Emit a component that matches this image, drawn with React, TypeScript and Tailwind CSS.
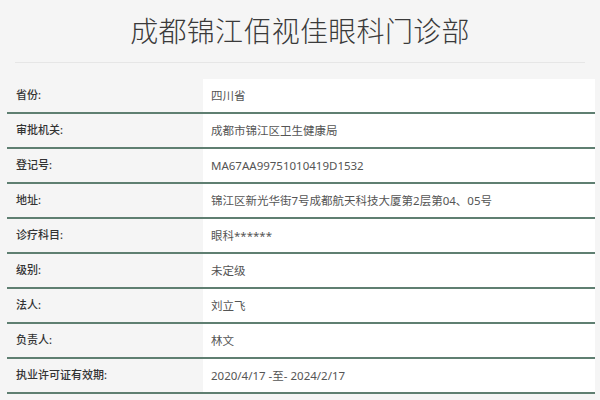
const ROWS = [
  { label: "省份:", value: "四川省" },
  { label: "审批机关:", value: "成都市锦江区卫生健康局" },
  { label: "登记号:", value: "MA67AA99751010419D1532" },
  { label: "地址:", value: "锦江区新光华街7号成都航天科技大厦第2层第04、05号" },
  { label: "诊疗科目:", value: "眼科******" },
  { label: "级别:", value: "未定级" },
  { label: "法人:", value: "刘立飞" },
  { label: "负责人:", value: "林文" },
  { label: "执业许可证有效期:", value: "2020/4/17 -至- 2024/2/17" },
];

export default function App() {
  return (
    <div
      className="w-[600px] h-[400px] overflow-hidden bg-[#f5f5f5]"
      style={{ fontFamily: '"Noto Sans", "Noto Sans CJK SC", sans-serif' }}
    >
      <div className="h-[62px] flex items-center justify-center">
        <h1 className="text-[28px] leading-none text-[#3a3a3a] font-light tracking-[0.3px]">
          成都锦江佰视佳眼科门诊部
        </h1>
      </div>
      <div className="mx-[15px] h-px bg-[#e6e6e6]" />

      <div className="mt-4 ml-[7px] mr-[5px]">
        {ROWS.map((row) => (
          <div key={row.label} className="flex h-[35px] border-b-2 border-[#5f7f71]">
            <div className="w-[196px] pl-[9px] flex items-center text-[11px] font-medium text-[#333]">
              {row.label}
            </div>
            <div className="flex-1 bg-white pl-2 flex items-center text-[11.5px] text-[#555]">
              {row.value}
            </div>
          </div>
        ))}
      </div>
    </div>
  );
}
